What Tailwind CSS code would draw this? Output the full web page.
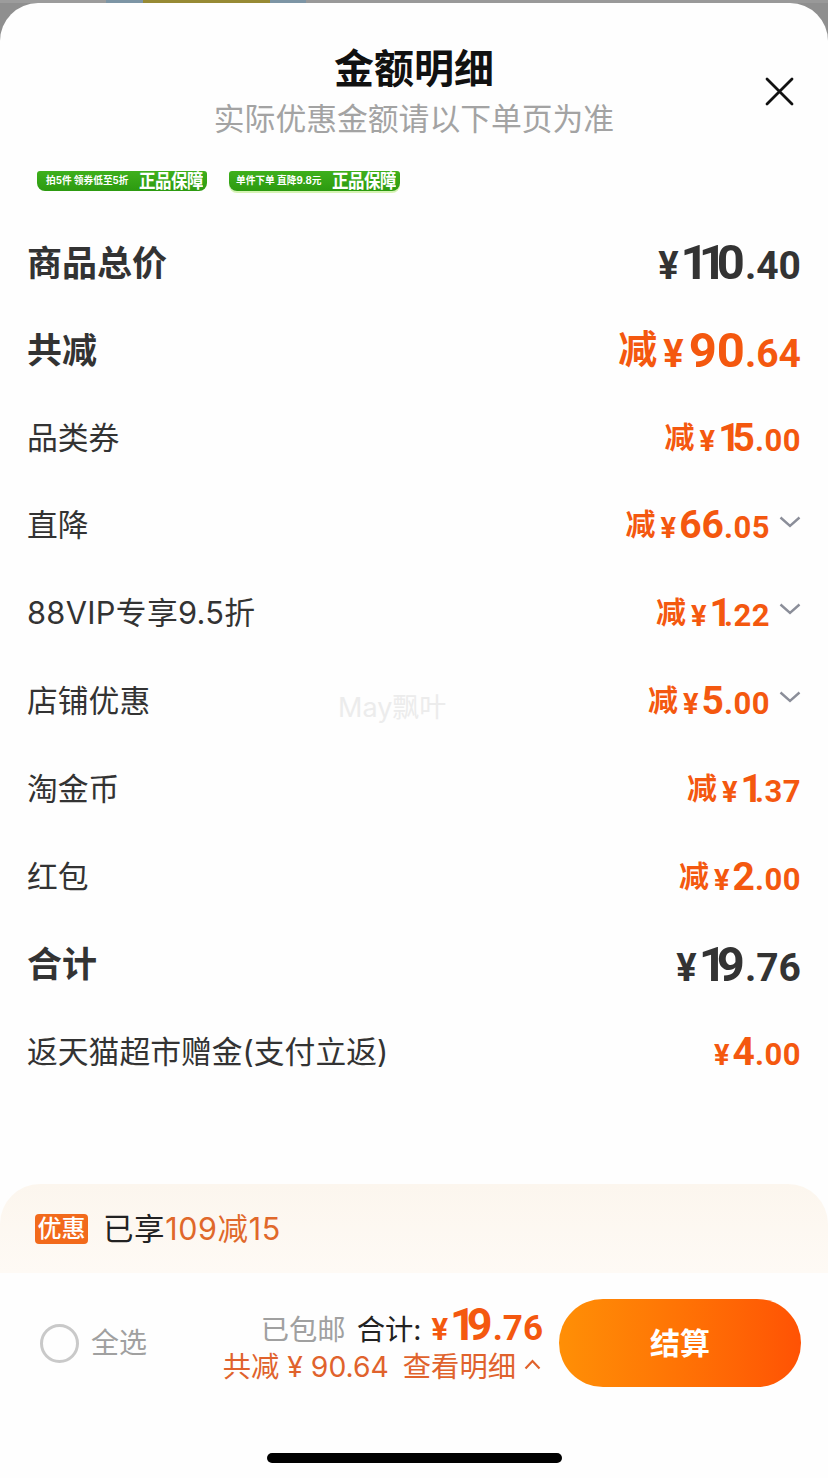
<!doctype html>
<html lang="zh">
<head>
<meta charset="utf-8">
<script src="https://cdn.jsdelivr.net/npm/@tailwindcss/browser@4"></script>
</head>
<body class="bg-[#8f8f8f]">
<div class="relative w-[828px] h-[1478px] overflow-hidden font-['Inter','Noto_Sans_CJK_SC',sans-serif] text-[#333]">
  <!-- page behind the sheet -->
  <div class="flex h-[3px]">
    <div class="w-[106px] bg-[#9c9c9c]"></div>
    <div class="w-[37px] bg-[#7d95a5]"></div>
    <div class="w-[127px] bg-[#978a35]"></div>
    <div class="w-[36px] bg-[#7d95a5]"></div>
    <div class="flex-1 bg-[#999]"></div>
  </div>

  <div class="flex flex-col h-[1475px] bg-[#fefefe] rounded-t-[38px]">
    <!-- Header -->
    <div class="relative flex flex-col items-center pt-[40px] h-[168px]">
      <h1 class="text-[40px] leading-[51px] font-bold text-[#111]">金额明细</h1>
      <p class="text-[30.8px] leading-[50px] text-[#a3a3a3]">实际优惠金额请以下单页为准</p>
      <svg class="absolute left-[765px] top-[74px] w-[29px] h-[29px]" viewBox="0 0 29 29" fill="none" stroke="#111" stroke-width="2.8" stroke-linecap="round"><path d="M2 2l25 25M27 2L2 27"/></svg>
    </div>

    <!-- Tags -->
    <div class="flex gap-[22px] pl-[37px] h-[23px]">
      <div class="flex items-center justify-between w-[170px] h-[20px] pl-[9px] pr-[4px] rounded-b-[8px] rounded-t-[3px] bg-gradient-to-b from-[#3fb01c] to-[#2c9a10] text-white font-bold">
        <span class="text-[9.7px] whitespace-nowrap">拍5件 领券低至5折</span><span class="text-[16.5px] leading-[20px] tracking-[-0.5px] scale-y-[1.15]">正品保障</span>
      </div>
      <div class="flex items-center justify-between w-[171px] h-[20px] pl-[7px] pr-[4px] rounded-b-[8px] rounded-t-[3px] bg-gradient-to-b from-[#3fb01c] to-[#2c9a10] text-white font-bold shadow-[0_2px_0_#d6f3b4]">
        <span class="text-[9.7px] whitespace-nowrap">单件下单 直降9.8元</span><span class="text-[16.5px] leading-[20px] tracking-[-0.5px] scale-y-[1.15]">正品保障</span>
      </div>
    </div>

    <!-- Rows -->
    <div class="flex flex-col px-[27px] pt-[25px]">
      <div class="flex items-center justify-between h-[88px]">
        <span class="text-[35px] font-bold">商品总价</span>
        <span class="flex items-baseline font-bold font-['Roboto','Noto_Sans_CJK_SC',sans-serif]"><span class="text-[38px] mr-[2px]">¥</span><span class="text-[49px]"><span class="tracking-[-10px]">11</span>0</span><span class="text-[39px]">.40</span></span>
      </div>
      <div class="flex items-center justify-between h-[87px]">
        <span class="text-[35px] font-bold">共减</span>
        <span class="flex items-baseline font-bold text-[#f4580f] font-['Roboto','Noto_Sans_CJK_SC',sans-serif]"><span class="text-[39px] mr-[6px] -translate-y-[4px]">减</span><span class="text-[38px] mr-[5px]">¥</span><span class="text-[49px]">90</span><span class="text-[39px]">.64</span></span>
      </div>
      <div class="flex items-center justify-between h-[88px]">
        <span class="text-[30.8px]">品类券</span>
        <span class="flex items-baseline font-bold text-[#f4580f] font-['Roboto','Noto_Sans_CJK_SC',sans-serif]"><span class="text-[30px] mr-[5px] -translate-y-[3px]">减</span><span class="text-[29px] mr-[3px]">¥</span><span class="text-[39px]"><span class="tracking-[-8px]">1</span>5</span><span class="text-[31px] tracking-[0.5px]">.00</span></span>
      </div>
      <div class="flex items-center justify-between h-[87px]">
        <span class="text-[30.8px]">直降</span>
        <span class="flex items-center font-bold text-[#f4580f] font-['Roboto','Noto_Sans_CJK_SC',sans-serif]"><span class="flex items-baseline"><span class="text-[30px] mr-[5px] -translate-y-[3px]">减</span><span class="text-[29px] mr-[3px]">¥</span><span class="text-[39px]">66</span><span class="text-[31px] tracking-[0.5px]">.05</span></span>
          <svg class="ml-[9px] mt-[-8px] w-[22px] h-[12px]" viewBox="0 0 22 12" fill="none" stroke="#8b8e99" stroke-width="2.4"><path d="M1.5 1.5L11 10l9.5-8.5"/></svg></span>
      </div>
      <div class="flex items-center justify-between h-[88px]">
        <span class="text-[30.8px] tracking-[0.3px]">88VIP专享9.5折</span>
        <span class="flex items-center font-bold text-[#f4580f] font-['Roboto','Noto_Sans_CJK_SC',sans-serif]"><span class="flex items-baseline"><span class="text-[30px] mr-[5px] -translate-y-[3px]">减</span><span class="text-[29px] mr-[3px]">¥</span><span class="text-[39px] tracking-[-8px]">1</span><span class="text-[31px] tracking-[0.5px]">.22</span></span>
          <svg class="ml-[9px] mt-[-8px] w-[22px] h-[12px]" viewBox="0 0 22 12" fill="none" stroke="#8b8e99" stroke-width="2.4"><path d="M1.5 1.5L11 10l9.5-8.5"/></svg></span>
      </div>
      <div class="flex items-center justify-between h-[88px]">
        <span class="text-[30.8px]">店铺优惠</span>
        <span class="flex items-center font-bold text-[#f4580f] font-['Roboto','Noto_Sans_CJK_SC',sans-serif]"><span class="flex items-baseline"><span class="text-[30px] mr-[5px] -translate-y-[3px]">减</span><span class="text-[29px] mr-[3px]">¥</span><span class="text-[39px]">5</span><span class="text-[31px] tracking-[0.5px]">.00</span></span>
          <svg class="ml-[9px] mt-[-8px] w-[22px] h-[12px]" viewBox="0 0 22 12" fill="none" stroke="#8b8e99" stroke-width="2.4"><path d="M1.5 1.5L11 10l9.5-8.5"/></svg></span>
      </div>
      <div class="flex items-center justify-between h-[88px]">
        <span class="text-[30.8px]">淘金币</span>
        <span class="flex items-baseline font-bold text-[#f4580f] font-['Roboto','Noto_Sans_CJK_SC',sans-serif]"><span class="text-[30px] mr-[5px] -translate-y-[3px]">减</span><span class="text-[29px] mr-[3px]">¥</span><span class="text-[39px] tracking-[-8px]">1</span><span class="text-[31px] tracking-[0.5px]">.37</span></span>
      </div>
      <div class="flex items-center justify-between h-[88px]">
        <span class="text-[30.8px]">红包</span>
        <span class="flex items-baseline font-bold text-[#f4580f] font-['Roboto','Noto_Sans_CJK_SC',sans-serif]"><span class="text-[30px] mr-[5px] -translate-y-[3px]">减</span><span class="text-[29px] mr-[3px]">¥</span><span class="text-[39px]">2</span><span class="text-[31px] tracking-[0.5px]">.00</span></span>
      </div>
      <div class="flex items-center justify-between h-[87px]">
        <span class="text-[35px] font-bold">合计</span>
        <span class="flex items-baseline font-bold font-['Roboto','Noto_Sans_CJK_SC',sans-serif]"><span class="text-[38px] mr-[2px]">¥</span><span class="text-[49px]"><span class="tracking-[-10px]">1</span>9</span><span class="text-[39px]">.76</span></span>
      </div>
      <div class="flex items-center justify-between h-[89px]">
        <span class="text-[30.8px]">返天猫超市赠金(支付立返)</span>
        <span class="flex items-baseline font-bold text-[#f4580f] font-['Roboto','Noto_Sans_CJK_SC',sans-serif]"><span class="text-[29px] mr-[3px]">¥</span><span class="text-[39px]">4</span><span class="text-[31px] tracking-[0.5px]">.00</span></span>
      </div>
    </div>

    <!-- Promo band -->
    <div class="flex items-center gap-[15px] mt-auto h-[89px] pl-[35px] rounded-t-[40px] bg-gradient-to-b from-[#fcf6ee] to-[#fefaf5] text-[30.5px]">
      <span class="flex items-center justify-center w-[53px] h-[30px] rounded-[4px] bg-[#f26a1b] text-white text-[24px] font-medium">优惠</span>
      <span class="text-[#222] tracking-[0.6px]">已享<span class="text-[#e0682a]">109减15</span></span>
    </div>

    <!-- Bottom bar -->
    <div class="flex items-start h-[205px] pt-[26px] pl-[40px] pr-[27px] bg-[#fefefe]">
      <div class="flex items-center gap-[12px] h-[88px]">
        <span class="w-[39px] h-[39px] rounded-full border-[3px] border-[#c9c9c9]"></span>
        <span class="text-[28px] text-[#a0a0a0]">全选</span>
      </div>
      <div class="flex flex-col items-end ml-auto mr-[16px]">
        <div class="flex items-baseline mt-[3px] h-[47px] leading-none">
          <span class="text-[28.3px] text-[#a0a0a0] mr-[11px]">已包邮</span>
          <span class="text-[28.3px] text-[#222] mr-[10px]">合计:</span>
          <span class="flex items-baseline font-bold text-[#f4580f] font-['Roboto','Noto_Sans_CJK_SC',sans-serif]"><span class="text-[31px] mr-[2px]">¥</span><span class="text-[45px]"><span class="tracking-[-9px]">1</span>9</span><span class="text-[35px]">.76</span></span>
        </div>
        <div class="flex items-center pr-[2px] text-[#e0622c] text-[28.3px] leading-[36px]">
          <span>共减 ¥ 90.64</span><span class="ml-[14px]">查看明细</span>
          <svg class="ml-[8px] mt-[-6px] w-[17px] h-[11px]" viewBox="0 0 17 11" fill="none" stroke="#e0622c" stroke-width="2.2"><path d="M1.5 9.5L8.5 2l7 7.5"/></svg>
        </div>
      </div>
      <button class="flex items-center justify-center w-[242px] h-[88px] rounded-full bg-gradient-to-r from-[#ff8f06] to-[#ff5204] text-white text-[30px] font-bold">结算</button>
    </div>
  </div>

  <!-- Watermark -->
  <span class="absolute left-[338px] top-[688px] text-[27px] text-[#ececec]">May飘叶</span>
  <!-- Home indicator -->
  <div class="absolute left-[267px] top-[1453px] w-[295px] h-[10px] rounded-full bg-black"></div>
</div>
</body>
</html>
